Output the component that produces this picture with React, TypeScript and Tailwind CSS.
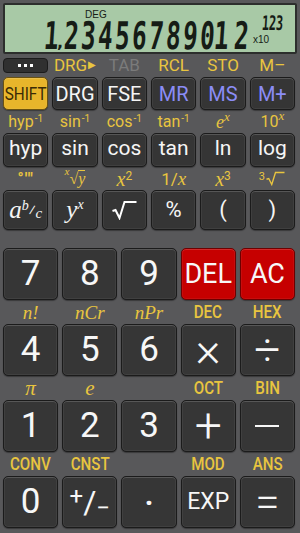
import React from 'react';

const Y = 'text-[#e9c53f]';
const SERIF = "font-['Liberation_Serif',serif] italic";

function Key({ children, className = '' }: { children: React.ReactNode; className?: string }) {
  return (
    <div
      className={`flex items-center justify-center rounded-[5px] border border-[#1b1b1b] shadow-[inset_0_1px_0_rgba(255,255,255,0.12),inset_0_0_0_1px_rgba(255,255,255,0.05),0_1px_1px_rgba(0,0,0,0.35)] ${className}`}
    >
      {children}
    </div>
  );
}

function Radical({ w, h, stroke = 2, color = 'white' }: { w: number; h: number; stroke?: number; color?: string }) {
  return (
    <svg width={w} height={h} viewBox="0 0 26 20" fill="none">
      <path d="M1 11 L4 10 L8 18 L13 2 L25 2" stroke={color} strokeWidth={stroke} strokeLinejoin="miter" />
    </svg>
  );
}

function Lcd() {
  const digits = '123456789012'.split('');
  return (
    <div className="mx-[3px] mt-[3px] h-[51px] rounded-[2px] border-2 border-[#2c2e2c] bg-[#a8c9a6] text-[#161c16]">
      <div className="h-[17px] pl-[80px] pt-[5px] font-['Liberation_Sans',sans-serif] text-[10px] leading-none">DEG</div>
      <div className="flex items-end pl-[40px]">
        <div className="flex h-[29px] items-end">
          {digits.map((d, i) => (
            <div key={i} className={`flex h-[29px] w-[17px] items-end ${d === '1' ? 'justify-end' : 'justify-center'}`}>
              <span className="inline-block origin-bottom -skew-x-[6deg] scale-x-[0.64] font-['DejaVu_Sans_Mono',monospace] text-[38px] font-bold leading-[29px]">
                {d}
              </span>
              {i === 0 && (
                <span className="inline-block w-0 -translate-x-[5px] font-['DejaVu_Sans',sans-serif] text-[16px] font-bold leading-none">
                  ,
                </span>
              )}
            </div>
          ))}
        </div>
        <div className="ml-[4px] -mt-[4px] flex flex-col items-end self-start">
          <div className="-mt-[3px] flex h-[16px] items-end">
            {['1', '2', '3'].map((d, i) => (
              <span key={i} className="inline-block w-[7px] origin-bottom -skew-x-[6deg] scale-x-[0.6] text-center font-['DejaVu_Sans_Mono',monospace] text-[20px] font-bold leading-[16px]">
                {d}
              </span>
            ))}
          </div>
          <span className="mr-[12px] mt-[4px] font-['Liberation_Sans',sans-serif] text-[10px] leading-none">x10</span>
        </div>
      </div>
    </div>
  );
}

function LabelRow({ items, h }: { items: React.ReactNode[]; h: string }) {
  return (
    <div className={`grid gap-x-[4px] pl-[3px] pr-[5px] ${h} ${items.length === 6 ? 'grid-cols-6' : 'grid-cols-5'}`}>
      {items.map((it, i) => (
        <div key={i} className={`flex items-center justify-center leading-none ${Y}`}>
          {it}
        </div>
      ))}
    </div>
  );
}

const sup1 = <sup className="ml-[1px] text-[10px] leading-none">-1</sup>;
const narrow = 'inline-block scale-x-[0.84] text-[18px] font-medium';

export default function App() {
  const smallKey = 'bg-[#353535] text-[#f5f5f5]';
  const numKey = 'bg-[#363636] text-[#f7f7f7] h-[52px]';
  const red = 'bg-[#c60000] border-[#6e0000] text-[#f7f7f7] h-[52px]';

  return (
    <div className="h-[533px] w-[300px] select-none overflow-hidden bg-[#58585a] font-['Roboto',sans-serif]">
      <Lcd />

      {/* shift labels */}
      <div className="mt-[1px] grid h-[20px] grid-cols-6 gap-x-[4px] pl-[3px] pr-[5px] text-[17px] leading-none">
        <div className="flex items-center">
          <div className="flex h-[15px] w-full items-center justify-center gap-[3px] rounded-[4px] border border-[#1b1b1b] bg-[#303030]">
            <span className="h-[3px] w-[3px] bg-white" />
            <span className="h-[3px] w-[3px] bg-white" />
            <span className="h-[3px] w-[3px] bg-white" />
          </div>
        </div>
        <div className={`flex items-center justify-center ${Y}`}>
          DRG<span className="ml-[1px] text-[10px]">▶</span>
        </div>
        <div className="flex items-center justify-center text-[#7b7b7b]">TAB</div>
        <div className={`flex items-center justify-center ${Y}`}>RCL</div>
        <div className={`flex items-center justify-center ${Y}`}>STO</div>
        <div className={`flex items-center justify-center ${Y}`}>M–</div>
      </div>

      {/* row 1 */}
      <div className="mt-[2px] grid h-[33px] grid-cols-6 gap-x-[4px] pl-[3px] pr-[5px] text-[20px]">
        <Key className="border-[#6b5210] bg-[#e8b52b] text-[#3a2b06]">
          <span className="inline-block scale-x-[0.85] text-[18px]">SHIFT</span>
        </Key>
        <Key className={smallKey}>DRG</Key>
        <Key className={smallKey}>FSE</Key>
        <Key className="bg-[#353535] text-[#8b8cf6]">MR</Key>
        <Key className="bg-[#353535] text-[#8b8cf6]">MS</Key>
        <Key className="bg-[#353535] text-[#8b8cf6]">M+</Key>
      </div>

      <LabelRow
        h="h-[23px] text-[16px]"
        items={[
          <span>hyp{sup1}</span>,
          <span>sin{sup1}</span>,
          <span>cos{sup1}</span>,
          <span>tan{sup1}</span>,
          <span>
            <span className={`${SERIF} text-[18px]`}>e</span>
            <sup className={`${SERIF} text-[13px]`}>x</sup>
          </span>,
          <span>
            10<sup className={`${SERIF} text-[13px]`}>x</sup>
          </span>,
        ]}
      />

      {/* row 2 */}
      <div className="grid h-[34px] grid-cols-6 gap-x-[4px] pl-[3px] pr-[5px] text-[21px]">
        {['hyp', 'sin', 'cos', 'tan', 'ln', 'log'].map((t) => (
          <Key key={t} className={smallKey}>
            <span className="-mt-[3px]">{t}</span>
          </Key>
        ))}
      </div>

      <LabelRow
        h="h-[23px] text-[16px]"
        items={[
          <span className="font-bold tracking-[1px]">°′″</span>,
          <span className={`${SERIF} flex items-end text-[16px]`}>
            <span className="-mt-[4px] self-start text-[11px]">x</span>
            <span className="not-italic">√</span>
            <span className="border-t border-[#e9c53f]">y</span>
          </span>,
          <span>
            <span className={`${SERIF} text-[20px]`}>x</span>
            <sup className="text-[12px]">2</sup>
          </span>,
          <span className="text-[17px]">
            1/<span className={`${SERIF} text-[19px]`}>x</span>
          </span>,
          <span>
            <span className={`${SERIF} text-[20px]`}>x</span>
            <sup className="text-[12px]">3</sup>
          </span>,
          <span className="flex items-start">
            <span className="text-[11px]">3</span>
            <Radical w={21} h={15} stroke={1.8} color="#e9c53f" />
          </span>,
        ]}
      />

      {/* row 3 */}
      <div className="grid h-[34px] grid-cols-6 gap-x-[4px] pl-[3px] pr-[5px] text-[22px]">
        <Key className={smallKey}>
          <span className={`${SERIF} text-[25px]`}>a</span>
          <span className={`${SERIF} -mt-[8px] text-[14px]`}>b</span>
          <span className="text-[15px]">⁄</span>
          <span className={`${SERIF} mt-[6px] text-[15px]`}>c</span>
        </Key>
        <Key className={smallKey}>
          <span className={`${SERIF} text-[25px]`}>y</span>
          <span className={`${SERIF} -mt-[10px] text-[14px]`}>x</span>
        </Key>
        <Key className={smallKey}>
          <Radical w={27} h={20} />
        </Key>
        <Key className={smallKey}>%</Key>
        <Key className={smallKey}>(</Key>
        <Key className={smallKey}>)</Key>
      </div>

      <div className="h-[24px]" />

      {/* number pad */}
      <div className="grid grid-cols-5 gap-x-[4px] pl-[3px] pr-[5px] text-[35px]">
        <Key className={numKey}>7</Key>
        <Key className={numKey}>8</Key>
        <Key className={numKey}>9</Key>
        <Key className={`${red} text-[27px]`}>DEL</Key>
        <Key className={`${red} text-[27px]`}>AC</Key>
      </div>
      <LabelRow
        h="h-[24px] text-[17px]"
        items={[
          <span className={`${SERIF} text-[19px]`}>n!</span>,
          <span className={`${SERIF} text-[19px]`}>nCr</span>,
          <span className={`${SERIF} text-[19px]`}>nPr</span>,
          <span className={narrow}>DEC</span>,
          <span className={narrow}>HEX</span>,
        ]}
      />
      <div className="grid grid-cols-5 gap-x-[4px] pl-[3px] pr-[5px] text-[35px]">
        <Key className={numKey}>4</Key>
        <Key className={numKey}>5</Key>
        <Key className={numKey}>6</Key>
        <Key className={`${numKey} text-[48px] font-light`}>×</Key>
        <Key className={`${numKey} text-[46px] font-light`}>÷</Key>
      </div>
      <LabelRow
        h="h-[24px] text-[17px]"
        items={[
          <span className={`${SERIF} text-[21px]`}>π</span>,
          <span className={`${SERIF} text-[21px]`}>e</span>,
          <span />,
          <span className={narrow}>OCT</span>,
          <span className={narrow}>BIN</span>,
        ]}
      />
      <div className="grid grid-cols-5 gap-x-[4px] pl-[3px] pr-[5px] text-[35px]">
        <Key className={numKey}>1</Key>
        <Key className={numKey}>2</Key>
        <Key className={numKey}>3</Key>
        <Key className={`${numKey} text-[48px] font-light`}>+</Key>
        <Key className={numKey}>
          <span className="h-[2px] w-[24px] bg-[#f7f7f7]" />
        </Key>
      </div>
      <LabelRow
        h="h-[24px] text-[17px]"
        items={[
          <span className={narrow}>CONV</span>,
          <span className={narrow}>CNST</span>,
          <span />,
          <span className={narrow}>MOD</span>,
          <span className={narrow}>ANS</span>,
        ]}
      />
      <div className="grid grid-cols-5 gap-x-[4px] pl-[3px] pr-[5px] text-[35px]">
        <Key className={numKey}>0</Key>
        <Key className={numKey}>
          <span className="-mt-[12px] text-[24px] leading-none">+</span>
          <span className="text-[32px] leading-none">/</span>
          <span className="mt-[12px] text-[24px] leading-none">−</span>
        </Key>
        <Key className={numKey}>
          <span className="text-[30px] font-bold">·</span>
        </Key>
        <Key className={`${numKey} text-[23px]`}>EXP</Key>
        <Key className={`${numKey} text-[44px] font-light`}>=</Key>
      </div>
    </div>
  );
}
